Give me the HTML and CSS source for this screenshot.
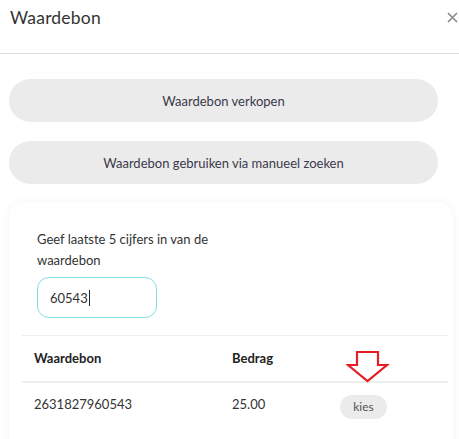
FILE: index.html
```html
<!DOCTYPE html>
<html>
<head>
<meta charset="utf-8">
<link rel="stylesheet" href="styles.css">
</head>
<body>
<div class="modal">
  <header class="modal-header">
    <h1 class="title">Waardebon</h1>
    <button class="close" aria-label="close">
      <svg width="11" height="11" viewBox="0 0 11 11"><path d="M1 1L10 10M10 1L1 10" stroke="#8a8a8a" stroke-width="1.6" fill="none"/></svg>
    </button>
  </header>
  <div class="modal-body">
    <button class="pill">Waardebon verkopen</button>
    <button class="pill">Waardebon gebruiken via manueel zoeken</button>
    <section class="card">
      <label class="label">Geef laatste 5 cijfers in van de waardebon</label>
      <div class="input"><span>60543</span><span class="caret"></span></div>
      <table class="table">
        <thead>
          <tr><th class="c1">Waardebon</th><th class="c2">Bedrag</th><th class="c3"></th></tr>
        </thead>
        <tbody>
          <tr><td>2631827960543</td><td>25.00</td><td><button class="kies">kies</button></td></tr>
        </tbody>
      </table>
      <svg class="arrow" width="44" height="32" viewBox="0 0 44 32"><path d="M11 1H32V14H41L21.5 30L2 14H11Z" fill="none" stroke="#e81c24" stroke-width="2.2" stroke-linejoin="miter"/></svg>
    </section>
  </div>
</div>
</body>
</html>
```
FILE: styles.css
```css
* { box-sizing: border-box; }
html, body { margin: 0; padding: 0; background: #fff; }
body { font-family: Lato, "Noto Sans", sans-serif; color: #333; width: 459px; height: 439px; overflow: hidden; }
.modal-header {
  height: 54px;
  border-bottom: 1px solid #dcdcdc;
  display: flex;
  align-items: flex-start;
  justify-content: space-between;
  padding: 7px 0 0 10px;
}
.title { margin: 0; font-size: 17.5px; font-weight: 400; color: #333; letter-spacing: 0.2px; }
.close { border: 0; background: none; padding: 0; margin: 5px 1px 0 0; width: 11px; height: 11px; display: block; }
.close svg { display: block; }
.modal-body { padding: 25px 0 0 9px; display: flex; flex-direction: column; }
.pill {
  width: 429px; height: 43px; border: 0; border-radius: 22px; background: #ebebeb;
  font-family: inherit; font-size: 13px; color: #3a3a4a; margin-bottom: 19px; padding: 0;
}
.pill + .pill { margin-bottom: 18px; }
.card {
  position: relative;
  width: 444px; background: #fff; border-radius: 15px;
  box-shadow: 0 0 8px rgba(0,0,0,0.05);
  padding: 27px 6px 30px 13px;
}
.label { display: block; width: 200px; margin-left: 15px; font-size: 13px; line-height: 21px; color: #333; }
.input {
  margin: 6px 0 17px 15px; width: 120px; height: 41px;
  border: 1px solid #7fe0e0; border-radius: 12px;
  display: flex; align-items: center; padding-left: 12px; font-size: 13px; color: #333;
}
.caret { display: inline-block; width: 1px; height: 16px; background: #222; margin-left: 1px; }
.table { width: 426px; border-collapse: collapse; font-size: 13px; }
.table th { text-align: left; font-weight: 700; color: #222; height: 46px; padding: 0 0 0 12px; border-top: 1px solid #eee; border-bottom: 2px solid #eee; }
.table td { padding: 0 0 0 12px; height: 44px; color: #333; }
.c1 { width: 198px; }
.c2 { width: 108px; }
.kies { border: 0; border-radius: 12px; background: #ebebeb; font-family: inherit; font-size: 12px; color: #555; width: 47px; height: 24px; padding: 0; margin-top: 5px; }
.arrow { position: absolute; left: 337px; top: 149px; }
```
